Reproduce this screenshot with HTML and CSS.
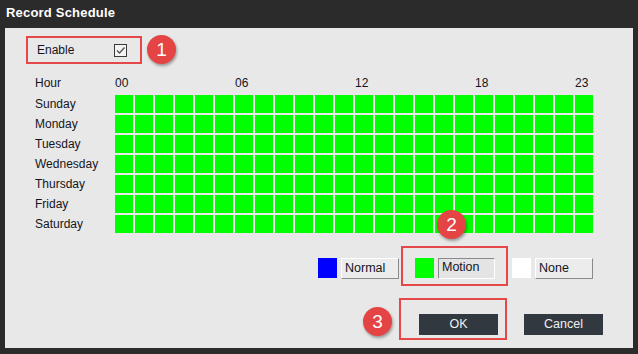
FILE: index.html
```html
<!DOCTYPE html>
<html>
	<head>
		<meta charset="UTF-8">
		<title>Record Schedule</title>
		<link rel="stylesheet" href="styles.css">
	</head>
	<body>
		<div class="dialog">
			<div class="title">Record Schedule</div>
			<div class="panel">
				<div class="mark enable">
					<span>Enable</span>
					<span class="check">
						<svg width="11" height="11" viewBox="0 0 11 11"><path d="M2 5.5 L4.5 8 L9.5 2.5" fill="none" stroke="#555" stroke-width="1.4"/></svg>
					</span>
					<b class="badge b1">1</b>
				</div>

				<div class="grid">
					<span class="day">Hour</span>
					<span class="hour h0">00</span>
					<span class="hour h6">06</span>
					<span class="hour h12">12</span>
					<span class="hour h18">18</span>
					<span class="hour h23">23</span>

					<span class="day">Sunday</span>
					<i></i><i></i><i></i><i></i><i></i><i></i><i></i><i></i><i></i><i></i><i></i><i></i><i></i><i></i><i></i><i></i><i></i><i></i><i></i><i></i><i></i><i></i><i></i><i></i>
					<span class="day">Monday</span>
					<i></i><i></i><i></i><i></i><i></i><i></i><i></i><i></i><i></i><i></i><i></i><i></i><i></i><i></i><i></i><i></i><i></i><i></i><i></i><i></i><i></i><i></i><i></i><i></i>
					<span class="day">Tuesday</span>
					<i></i><i></i><i></i><i></i><i></i><i></i><i></i><i></i><i></i><i></i><i></i><i></i><i></i><i></i><i></i><i></i><i></i><i></i><i></i><i></i><i></i><i></i><i></i><i></i>
					<span class="day">Wednesday</span>
					<i></i><i></i><i></i><i></i><i></i><i></i><i></i><i></i><i></i><i></i><i></i><i></i><i></i><i></i><i></i><i></i><i></i><i></i><i></i><i></i><i></i><i></i><i></i><i></i>
					<span class="day">Thursday</span>
					<i></i><i></i><i></i><i></i><i></i><i></i><i></i><i></i><i></i><i></i><i></i><i></i><i></i><i></i><i></i><i></i><i></i><i></i><i></i><i></i><i></i><i></i><i></i><i></i>
					<span class="day">Friday</span>
					<i></i><i></i><i></i><i></i><i></i><i></i><i></i><i></i><i></i><i></i><i></i><i></i><i></i><i></i><i></i><i></i><i></i><i></i><i></i><i></i><i></i><i></i><i></i><i></i>
					<span class="day">Saturday</span>
					<i></i><i></i><i></i><i></i><i></i><i></i><i></i><i></i><i></i><i></i><i></i><i></i><i></i><i></i><i></i><i></i><i></i><i></i><i></i><i></i><i></i><i></i><i></i><i></i>
				</div>

				<div class="legend">
					<span class="swatch blue"></span>
					<span class="btn">Normal</span>
					<div class="mark motion">
						<span class="swatch green"></span>
						<span class="btn down">Motion</span>
						<b class="badge b2">2</b>
					</div>
					<span class="swatch white"></span>
					<span class="btn">None</span>
				</div>

				<div class="actions">
					<div class="mark okbox">
						<span class="dark">OK</span>
						<b class="badge b3">3</b>
					</div>
					<span class="dark cancel">Cancel</span>
				</div>
			</div>
		</div>
	</body>
</html>
```

FILE: styles.css
```css
*{
	margin: 0;
	padding: 0;
	box-sizing: border-box;
}
body{
	width: 638px;
	height: 354px;
	overflow: hidden;
	font-family: "Liberation Sans", Arial, sans-serif;
	font-size: 12px;
	color: #14141c;
}
.dialog{
	width: 638px;
	height: 354px;
	background: #2b2b2b;
}
.title{
	height: 28px;
	padding: 5px 0 0 6px;
	color: #fff;
	font-weight: bold;
	font-size: 13px;
	letter-spacing: 0.2px;
	line-height: 16px;
}
.panel{
	height: 320px;
	margin: 0 5px;
	padding-top: 8px;
	background: #e8e8e8;
}
.mark{
	position: relative;
	border: 2px solid #e54848;
}
.badge{
	position: absolute;
	width: 29px;
	height: 29px;
	border-radius: 50%;
	background: #e44444;
	color: #fff;
	font-weight: normal;
	font-size: 19px;
	line-height: 29px;
	text-align: center;
	box-shadow: 1px 2px 3px rgba(0,0,0,0.35);
}
.enable{
	width: 116px;
	height: 28px;
	margin-left: 21px;
	padding: 0 13px 0 9px;
	display: flex;
	align-items: center;
	justify-content: space-between;
}
.check{
	width: 13px;
	height: 13px;
	border: 1px solid #3a3a3a;
	background: #f4f4f4;
	display: flex;
	align-items: center;
	justify-content: center;
}
.b1{
	left: 119px;
	top: -3px;
}
.grid{
	display: grid;
	grid-template-columns: 78px repeat(24, 18px);
	grid-auto-rows: 18px;
	gap: 2px;
	margin: 11px 0 0 30px;
}
.grid i{
	background: #00ff00;
}
.day,.hour{
	line-height: 16px;
	white-space: nowrap;
}
.grid .day ~ .day{
	line-height: 18px;
}
.h0{ grid-column: 2; }
.h6{ grid-column: 8; }
.h12{ grid-column: 14; }
.h18{ grid-column: 20; }
.h23{ grid-column: 25; }
.legend{
	display: flex;
	align-items: flex-start;
	justify-content: flex-end;
	padding-right: 40px;
	margin-top: 13px;
}
.swatch{
	width: 19px;
	height: 20px;
	margin-top: 12px;
	margin-right: 4px;
}
.blue{ background: #0000ff; }
.green{ background: #00ff00; margin-top: 0; }
.white{ background: #fff; }
.btn{
	width: 58px;
	height: 21px;
	margin-top: 12px;
	padding-left: 3px;
	line-height: 19px;
	font-size: 12.5px;
	background: #ececec;
	border: 1px solid;
	border-color: #fff #8a8a8a #8a8a8a #fff;
}
.motion{
	display: flex;
	margin: 0 4px 0 2px;
	padding: 10px 11px 5px 12px;
}
.motion .btn{
	margin-top: 0;
	width: 57px;
	line-height: 17px;
	background: #e4e4e4;
	border-color: #8a8a8a #fff #fff #8a8a8a;
}
.b2{
	left: 34px;
	top: -38px;
}
.actions{
	display: flex;
	align-items: flex-start;
	justify-content: flex-end;
	padding-right: 30px;
	margin-top: 12px;
}
.okbox{
	height: 42px;
	padding: 14px 7px 0 18px;
}
.dark{
	display: block;
	width: 79px;
	height: 21px;
	background: #323840;
	color: #eef0f2;
	font-size: 12.5px;
	line-height: 21px;
	text-align: center;
}
.cancel{
	margin: 16px 0 0 17px;
}
.b3{
	left: -38px;
	top: 7px;
}
```
